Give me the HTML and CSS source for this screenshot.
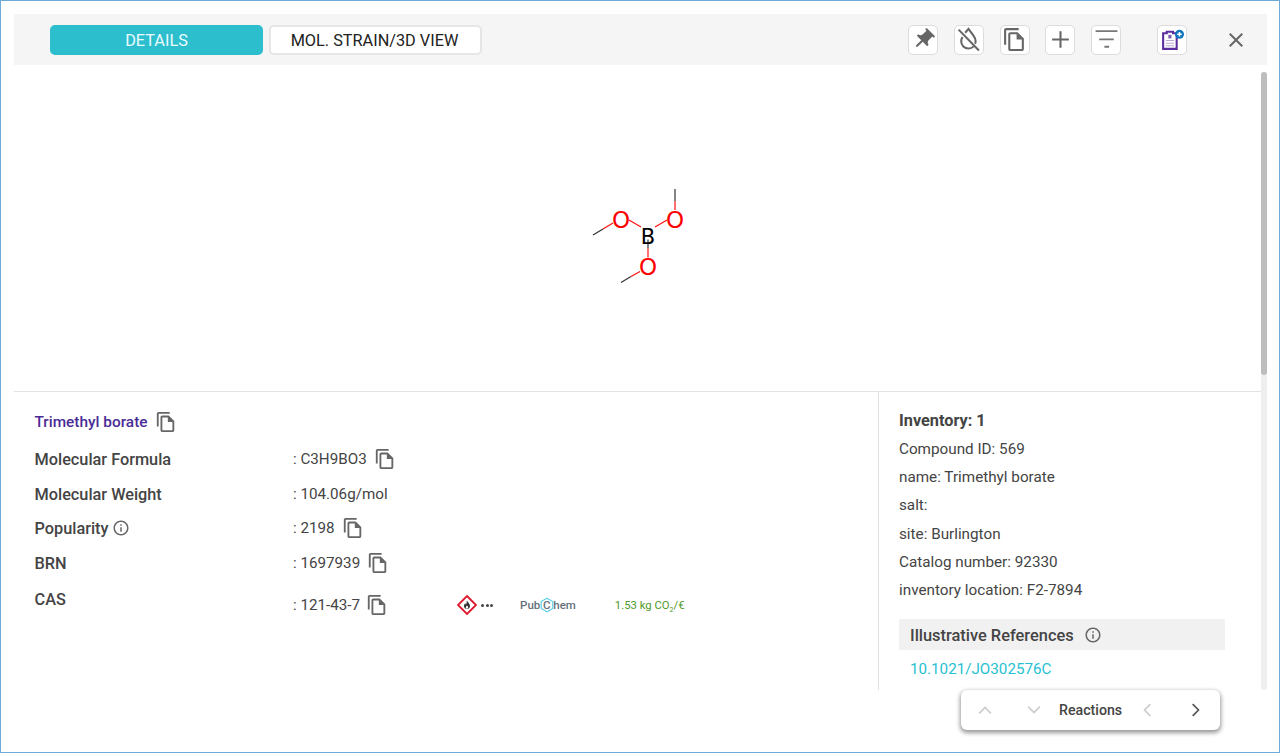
FILE: index.html
```html
<!DOCTYPE html>
<html lang="en">
<head>
<meta charset="utf-8">
<title>Trimethyl borate</title>
<link rel="stylesheet" href="styles.css">
</head>
<body>
<svg class="defs" width="0" height="0" aria-hidden="true">
  <symbol id="copy" viewBox="0 0 24 24"><path d="M16 1H4c-1.1 0-2 .9-2 2v14h2V3h12V1zm-1 4H8c-1.1 0-1.99.9-1.99 2L6 21c0 1.1.89 2 1.99 2H19c1.1 0 2-.9 2-2V11l-6-6zM8 21V7h6v5h5v9H8z"/></symbol>
  <symbol id="info" viewBox="0 0 24 24"><path d="M11 7h2v2h-2zm0 4h2v6h-2zm1-9C6.48 2 2 6.48 2 12s4.48 10 10 10 10-4.48 10-10S17.52 2 12 2zm0 18c-4.41 0-8-3.59-8-8s3.59-8 8-8 8 3.590 8 8-3.590 8-8 8z"/></symbol>
</svg>
<div class="frame">
  <header class="toolbar">
    <div class="tabs">
      <button class="tab tab-active">DETAILS</button>
      <button class="tab tab-second">MOL. STRAIN/3D VIEW</button>
    </div>
    <div class="tools">
      <span class="tool"><svg viewBox="0 0 24 24" class="tool-svg"><path transform="rotate(45 12 12)" d="M16 9V4h1c.55 0 1-.45 1-1s-.45-1-1-1H7c-.55 0-1 .45-1 1s.45 1 1 1h1v5c0 1.660-1.340 3-3 3v2h5.970v7l1 1 1-1v-7H19v-2c-1.660 0-3-1.340-3-3z"/></svg></span>
      <span class="tool"><svg viewBox="0 0 24 24" class="tool-svg"><path class="drop" d="M8.800 5.500L12 1.800l4.600 6.200c1.500 2 2.200 3.700 2.200 5.600 0 .9-.2 1.800-.5 2.500M6.200 9.500C5.400 10.900 5 12.200 5 13.700c0 3.900 3.100 7 7 7 1.900 0 3.700-.8 5-2.100"/><path class="drop" d="M2.500 2.500l19.500 20"/></svg></span>
      <span class="tool"><svg class="tool-svg"><use href="#copy"/></svg></span>
      <span class="tool"><svg viewBox="0 0 24 24" class="tool-svg"><path d="M11 4h2v7h7v2h-7v7h-2v-7H4v-2h7z"/></svg></span>
      <span class="tool"><svg viewBox="0 0 24 24" class="tool-svg tool-filter"><path d="M1.500 3h21v1.800h-21zM5 11h14v1.800H5zM10 18h4.500v1.800H10z"/></svg></span>
      <span class="tool tool-sep"><svg viewBox="0 0 24 24" class="tool-svg"><path class="clip" d="M3 6h3.500V4.500h6V6H16v15H3z"/><path class="clip-thin" d="M5.500 13h8M5.500 15.500h8M5.500 18h8"/><path class="clip-mark" d="M8 7.500h3V11H8z"/><circle class="badge" cx="18.700" cy="7" r="4.300"/><path class="badge-plus" d="M16.500 7h4.400M18.700 4.800v4.400"/></svg></span>
      <span class="close"><svg viewBox="0 0 24 24" class="close-svg"><path d="M19 6.410L17.590 5 12 10.590 6.410 5 5 6.410 10.590 12 5 17.590 6.410 19 12 13.410 17.590 19 19 17.590 13.410 12z"/></svg></span>
    </div>
  </header>

  <main class="content">
    <section class="scroller">
      <div class="structure">
        <svg class="molecule" width="100" height="100" viewBox="0 0 100 100">
          <g class="bond-dark">
            <path d="M55 55.500v9"/>
            <path d="M0 51l10-6"/>
            <path d="M82 5v12"/>
            <path d="M28 98.500l10-6"/>
          </g>
          <g class="bond-red">
            <path d="M10 45l10-6"/>
            <path d="M36 36l12 7"/>
            <path d="M62 43l12-7"/>
            <path d="M82 17v9"/>
            <path d="M55 64.500v9"/>
            <path d="M38 92.500l9-5"/>
          </g>
          <text class="atom atom-o" x="28" y="44">O</text>
          <text class="atom atom-o" x="82" y="44">O</text>
          <text class="atom atom-o" x="55" y="91">O</text>
          <text class="atom atom-b" x="55" y="60">B</text>
        </svg>
      </div>
      <div class="details">
        <div class="props">
          <div class="title-row">
            <span class="title">Trimethyl borate</span>
            <svg class="copy copy-title"><use href="#copy"/></svg>
          </div>
          <div class="prop prop-formula">
            <span class="label">Molecular Formula</span>
            <span class="value">: C3H9BO3<svg class="copy"><use href="#copy"/></svg></span>
          </div>
          <div class="prop prop-weight">
            <span class="label">Molecular Weight</span>
            <span class="value">: 104.06g/mol</span>
          </div>
          <div class="prop prop-pop">
            <span class="label">Popularity<svg class="info"><use href="#info"/></svg></span>
            <span class="value">: 2198<svg class="copy"><use href="#copy"/></svg></span>
          </div>
          <div class="prop prop-brn">
            <span class="label">BRN</span>
            <span class="value">: 1697939<svg class="copy"><use href="#copy"/></svg></span>
          </div>
          <div class="prop prop-cas">
            <span class="label">CAS</span>
            <span class="value value-cas">: 121-43-7<svg class="copy"><use href="#copy"/></svg></span>
            <span class="extras">
              <svg class="hazard" viewBox="0 0 20 20"><path class="hazard-box" d="M10 1L19 10 10 19 1 10z"/><path class="hazard-flame" d="M10 5.500c.5 1.700 3 2.900 3 5.500 0 1.800-1.300 3-3 3s-3-1.200-3-3c0-1.200.6-2 1.300-2.700.1.700.4 1.100.8 1.300C9.800 8.200 9.500 6.800 10 5.500z"/><path class="hazard-core" d="M10 10.500c.7.700 1.200 1.300 1.200 2s-.5 1.200-1.200 1.200-1.200-.5-1.200-1.200.5-1.300 1.200-2z"/></svg>
              <span class="dots"><i></i><i></i><i></i></span>
              <span class="pubchem">Pub<span class="pubchem-c"><svg class="hex" viewBox="0 0 16 16"><path d="M8 1.200l5.800 3.400v6.800L8 14.800l-5.800-3.400V4.600z"/></svg>C</span>hem</span>
              <span class="co2">1.53 kg CO<sub>2</sub>/€</span>
            </span>
          </div>
        </div>
        <aside class="inventory">
          <p class="inv-title">Inventory: 1</p>
          <p class="inv-line">Compound ID: 569</p>
          <p class="inv-line">name: Trimethyl borate</p>
          <p class="inv-line">salt:</p>
          <p class="inv-line">site: Burlington</p>
          <p class="inv-line">Catalog number: 92330</p>
          <p class="inv-line">inventory location: F2-7894</p>
          <div class="refs-head">Illustrative References<svg class="info info-refs"><use href="#info"/></svg></div>
          <a class="ref-link">10.1021/JO302576C</a>
        </aside>
      </div>
    </section>
    <div class="scrollbar"><div class="thumb"></div></div>
  </main>

  <nav class="float-nav">
    <svg class="chev chev-off" viewBox="0 0 24 24"><path d="M5 16l7-7 7 7"/></svg>
    <svg class="chev chev-off" viewBox="0 0 24 24"><path d="M5 8l7 7 7-7"/></svg>
    <span class="nav-label">Reactions</span>
    <svg class="chev chev-off" viewBox="0 0 24 24"><path d="M16 5l-7 7 7 7"/></svg>
    <svg class="chev" viewBox="0 0 24 24"><path d="M8 5l7 7-7 7"/></svg>
  </nav>
</div>
</body>
</html>
```
FILE: styles.css
```css
* { box-sizing: border-box; }
html, body { margin: 0; padding: 0; height: 100%; }
body { font-family: Roboto, "Liberation Sans", sans-serif; color: #444; background: #fff; overflow: hidden; }
.defs { position: absolute; }
.frame { position: relative; width: 1280px; height: 753px; border: 1px solid #6fa9d6; padding: 13px 12px 0 13px; display: flex; flex-direction: column; }

.toolbar { height: 51px; flex: none; background: #f5f5f5; display: flex; align-items: center; justify-content: space-between; padding: 0 19px 0 36px; }
.tabs { display: flex; gap: 6px; }
.tab { width: 213px; height: 30px; border: 2px solid #e6e6e6; border-radius: 5px; background: #fff; font: 400 16.300px Roboto, sans-serif; color: #222; padding: 2px 0 0; }
.tab-active { background: #2cbecd; border-color: #2cbecd; color: #eafbfd; }
.tab-second { padding-right: 2px; }
.tools { display: flex; align-items: center; }
.tool { width: 30px; height: 30px; margin-right: 15.750px; border: 1px solid #dcdcdc; border-radius: 5px; background: #fff; display: flex; align-items: center; justify-content: center; }
.tool-sep { margin-left: 20.250px; margin-right: 37px; }
.tool-svg { width: 25px; height: 25px; fill: #666; display: block; flex: none; }
.tool-filter { fill: #777; }
.drop { fill: none; stroke: #666; stroke-width: 2; }
.clip { fill: #fff; stroke: #5b2d9e; stroke-width: 2; }
.clip-thin { fill: none; stroke: #b9a9d6; stroke-width: 1; }
.clip-mark { fill: #7a5bb0; }
.badge { fill: #0f74c0; }
.badge-plus { fill: none; stroke: #fff; stroke-width: 1.500; }
.close { width: 24px; height: 24px; }
.close-svg { width: 24px; height: 24px; fill: #666; display: block; }

.content { flex: none; height: 618px; margin-top: 7px; display: flex; overflow: hidden; }
.scroller { flex: 1; min-width: 0; }
.scrollbar { width: 6px; flex: none; background: #eee; border-radius: 3px; }
.thumb { height: 303px; background: #bdbdbd; border-radius: 3px; }

.structure { height: 320px; border-bottom: 1px solid #e3e3e3; display: flex; justify-content: center; padding: 112px 0 0 10px; }
.molecule { display: block; overflow: visible; }
.bond-dark path { stroke: #333; stroke-width: 1.200; fill: none; }
.bond-red path { stroke: #ff0d0d; stroke-width: 1.200; fill: none; }
.atom { font: 400 23px "DejaVu Sans", sans-serif; text-anchor: middle; }
.atom-o { fill: #ff0000; }
.atom-b { fill: #000; font-size: 21px; }

.details { display: flex; height: 298px; }
.props { width: 865px; flex: none; padding: 18px 0 0 20.500px; border-right: 1px solid #e3e3e3; }
.title-row { display: flex; align-items: center; height: 24px; margin-bottom: 13px; }
.title { font-size: 15.400px; font-weight: 500; color: #4a2c96; }
.copy { width: 22px; height: 22px; fill: #666; display: block; flex: none; }
.copy-title { margin-left: 7px; }
.prop { display: flex; align-items: center; }
.prop-formula { height: 24px; margin-bottom: 11px; }
.prop-weight { height: 24px; margin-bottom: 10px; }
.prop-pop { height: 24px; margin-bottom: 11px; }
.prop-brn { height: 24px; margin-bottom: 12px; }
.prop-cas { height: 24px; }
.label { width: 258.500px; flex: none; font-size: 16.300px; font-weight: 500; color: #444; display: flex; align-items: center; }
.value { font-size: 15.200px; color: #444; display: flex; align-items: center; gap: 7px; white-space: pre; }
.value-cas { gap: 6px; margin-top: 12px; }
.info { width: 18px; height: 18px; fill: #666; margin-left: 4px; flex: none; }
.extras { display: flex; align-items: center; margin-top: 12px; margin-left: 69px; }
.hazard { width: 20px; height: 20px; }
.hazard-box { fill: #fff; stroke: #e0182d; stroke-width: 1.800; }
.hazard-flame { fill: #333; }
.hazard-core { fill: #fff; }
.dots { display: flex; gap: 1.500px; margin-left: 4px; }
.dots i { width: 3px; height: 3px; border-radius: 50%; background: #444; }
.pubchem { position: relative; margin-left: 27px; font-size: 11.500px; font-weight: 500; color: #66707c; display: flex; align-items: center; }
.pubchem-c { position: relative; width: 13px; text-align: center; display: block; }
.hex { position: absolute; left: -1.500px; top: -1px; width: 16px; height: 16px; fill: none; stroke: #5fd0ea; stroke-width: 1.200; }
.co2 { margin-left: 39px; font-size: 11.300px; color: #4f9a2a; white-space: nowrap; }
.co2 sub { font-size: 7px; line-height: 0; }

.inventory { flex: 1; min-width: 0; padding: 17px 36px 0 20px; }
.inv-title { margin: 0; height: 24px; line-height: 24px; font-size: 16.300px; font-weight: 700; color: #444; }
.inv-line { margin: 4.200px 0 0; height: 24px; line-height: 24px; font-size: 15.250px; color: #444; }
.inv-title + .inv-line { margin-top: 4px; }
.refs-head { margin-top: 17px; height: 31px; background: #f1f1f1; padding: 2px 0 0 11px; font-size: 16.400px; font-weight: 500; color: #444; display: flex; align-items: center; }
.info-refs { margin-left: 10px; }
.ref-link { display: block; margin: 7px 0 0 11px; font-size: 15.200px; color: #27bfd2; line-height: 24px; }

.float-nav { position: absolute; left: 960px; top: 689px; width: 259px; height: 40px; background: #fff; border-radius: 6px; box-shadow: 0 2px 4px 1px rgba(0,0,0,.4); display: flex; align-items: center; padding-left: 14px; }
.chev { width: 20px; height: 20px; fill: none; stroke: #555; stroke-width: 2; flex: none; }
.chev-off { stroke: #ccc; }
.chev:nth-child(2) { margin-left: 29px; }
.nav-label { margin-left: 15px; width: 66px; font-size: 14.200px; font-weight: 500; color: #444; white-space: nowrap; }
.chev:nth-child(4) { margin-left: 12px; }
.chev:nth-child(5) { margin-left: 29px; }
```
